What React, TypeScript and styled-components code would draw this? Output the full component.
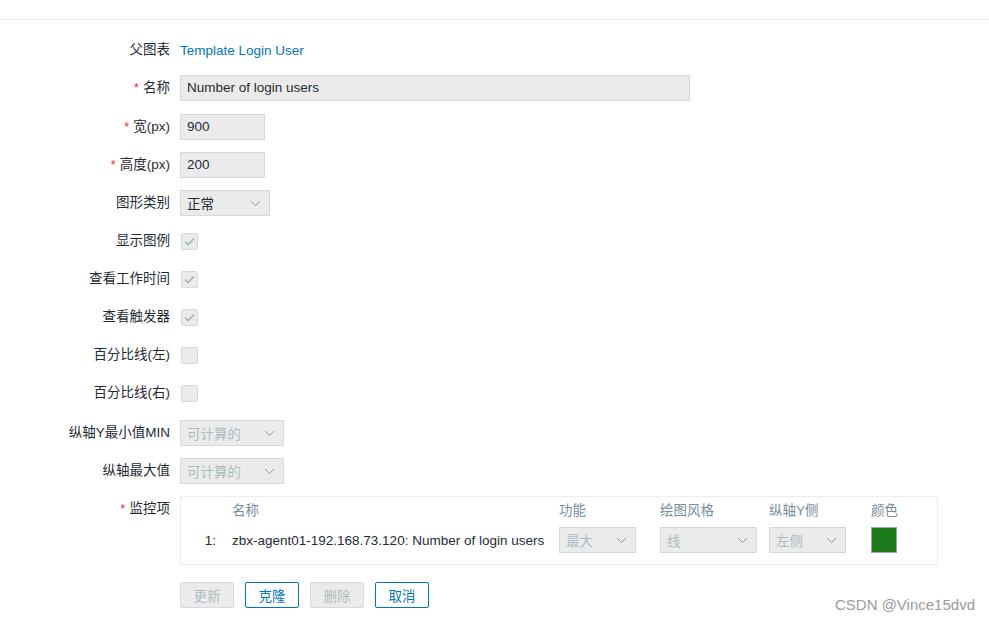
import React, { FunctionComponent } from "react";
import styled, { createGlobalStyle } from "styled-components";

const GlobalStyle = createGlobalStyle`
  html, body {
    margin: 0;
    padding: 0;
    background: #ffffff;
  }
  body {
    font-family: "Liberation Sans", Arial, "Noto Sans CJK SC", sans-serif;
    font-size: 13.5px;
    color: #1f2c33;
  }
`;

const Page = styled.div`
  position: relative;
  min-height: 100vh;
  background: #ffffff;
`;

const TopBar = styled.header`
  height: 19px;
  border-bottom: 1px solid #ebeef0;
`;

const FormList = styled.ul`
  list-style: none;
  margin: 0;
  padding: 17px 0 0;
  display: flex;
  flex-direction: column;
  gap: 12px;
`;

const Row = styled.li<{ $extraTop?: number }>`
  display: grid;
  grid-template-columns: 170px 1fr;
  column-gap: 10px;
  min-height: 26px;
  margin-top: ${(p) => p.$extraTop ?? 0}px;
`;

const Label = styled.label`
  display: flex;
  align-items: flex-start;
  justify-content: flex-end;
  height: 26px;
  line-height: 26px;
  white-space: nowrap;
`;

const Required = styled.span`
  color: #e33734;
  margin-right: 4px;
`;

const Field = styled.div`
  display: flex;
  align-items: center;
  min-height: 26px;
`;

const Link = styled.a`
  color: #0275b8;
  text-decoration: none;
`;

const TextInput = styled.div<{ $width: number }>`
  box-sizing: border-box;
  width: ${(p) => p.$width}px;
  height: 26px;
  line-height: 24px;
  padding: 0 6px;
  background: #ebebeb;
  border: 1px solid #d3dadf;
  color: #1f2c33;
`;

const SelectBox = styled.div<{ $width: number; $disabled?: boolean }>`
  box-sizing: border-box;
  width: ${(p) => p.$width}px;
  height: 26px;
  padding: 0 8px 0 6px;
  display: flex;
  align-items: center;
  justify-content: space-between;
  background: #ebebeb;
  border: 1px solid #d3dadf;
  color: ${(p) => (p.$disabled ? "#acbbc2" : "#1f2c33")};
`;

const Check = styled.span`
  box-sizing: border-box;
  width: 17px;
  height: 17px;
  margin-left: 1px;
  border: 1px solid #d3dadf;
  border-radius: 2px;
  background: #ebebeb;
  display: flex;
  align-items: center;
  justify-content: center;
`;

const ItemsBox = styled.div`
  box-sizing: border-box;
  width: 758px;
  border: 1px solid #ebeef0;
  padding: 6px 0 11px;
`;

const ItemsGrid = styled.div`
  display: grid;
  grid-template-columns: 51px 327px 101px 109px 102px 1fr;
  row-gap: 8px;
  align-items: center;
`;

const HeadCell = styled.div`
  color: #768d99;
  height: 16px;
  line-height: 16px;
`;

const IndexCell = styled.div`
  text-align: right;
  padding-right: 16px;
`;

const Swatch = styled.div<{ $color: string }>`
  box-sizing: border-box;
  width: 26px;
  height: 26px;
  background: ${(p) => p.$color};
  border: 1px solid #9aa7ae;
`;

const Buttons = styled.div`
  display: flex;
  gap: 11px;
`;

const Button = styled.button<{ $disabled?: boolean }>`
  box-sizing: border-box;
  width: 54px;
  height: 26px;
  padding: 0;
  border-radius: 2px;
  font-family: inherit;
  font-size: 13.5px;
  cursor: pointer;
  background: ${(p) => (p.$disabled ? "#ebebeb" : "#ffffff")};
  border: 1px solid ${(p) => (p.$disabled ? "#d3dadf" : "#0275b8")};
  color: ${(p) => (p.$disabled ? "#acbbc2" : "#0275b8")};
`;

const Watermark = styled.div`
  position: absolute;
  right: 14px;
  bottom: 6px;
  font-family: "Liberation Sans", Arial, sans-serif;
  font-size: 15px;
  color: #9a9a9a;
  text-shadow: 0 0 2px #ffffff;
`;

const Chevron: FunctionComponent = () => (
  <svg width="11" height="7" viewBox="0 0 11 7">
    <polyline points="1,1 5.5,5.5 10,1" fill="none" stroke="#8a9aa3" strokeWidth="1" />
  </svg>
);

const Tick: FunctionComponent = () => (
  <svg width="11" height="9" viewBox="0 0 11 9">
    <polyline points="1,4.5 4,7.5 10,1.5" fill="none" stroke="#a4b2b9" strokeWidth="1.6" />
  </svg>
);

const Select: FunctionComponent<{ width: number; disabled?: boolean; value: string }> = ({
  width,
  disabled,
  value,
}) => (
  <SelectBox $width={width} $disabled={disabled}>
    <span>{value}</span>
    <Chevron />
  </SelectBox>
);

const checkRows: { label: string; checked: boolean }[] = [
  { label: "显示图例", checked: true },
  { label: "查看工作时间", checked: true },
  { label: "查看触发器", checked: true },
  { label: "百分比线(左)", checked: false },
  { label: "百分比线(右)", checked: false },
];

const App: FunctionComponent = () => {
  return (
    <Page>
      <GlobalStyle />
      <TopBar />
      <FormList>
        <Row>
          <Label>父图表</Label>
          <Field>
            <Link href="#">Template Login User</Link>
          </Field>
        </Row>
        <Row>
          <Label>
            <Required>*</Required>名称
          </Label>
          <Field>
            <TextInput $width={510}>Number of login users</TextInput>
          </Field>
        </Row>
        <Row $extraTop={1}>
          <Label>
            <Required>*</Required>宽(px)
          </Label>
          <Field>
            <TextInput $width={85}>900</TextInput>
          </Field>
        </Row>
        <Row>
          <Label>
            <Required>*</Required>高度(px)
          </Label>
          <Field>
            <TextInput $width={85}>200</TextInput>
          </Field>
        </Row>
        <Row>
          <Label>图形类别</Label>
          <Field>
            <Select width={90} value="正常" />
          </Field>
        </Row>
        {checkRows.map((r) => (
          <Row key={r.label}>
            <Label>{r.label}</Label>
            <Field>
              <Check>{r.checked && <Tick />}</Check>
            </Field>
          </Row>
        ))}
        <Row $extraTop={2}>
          <Label>纵轴Y最小值MIN</Label>
          <Field>
            <Select width={104} value="可计算的" disabled />
          </Field>
        </Row>
        <Row>
          <Label>纵轴最大值</Label>
          <Field>
            <Select width={104} value="可计算的" disabled />
          </Field>
        </Row>
        <Row>
          <Label>
            <Required>*</Required>监控项
          </Label>
          <Field>
            <ItemsBox>
              <ItemsGrid>
                <div />
                <HeadCell>名称</HeadCell>
                <HeadCell>功能</HeadCell>
                <HeadCell>绘图风格</HeadCell>
                <HeadCell>纵轴Y侧</HeadCell>
                <HeadCell>颜色</HeadCell>
                <IndexCell>1:</IndexCell>
                <div>zbx-agent01-192.168.73.120: Number of login users</div>
                <Select width={77} value="最大" disabled />
                <Select width={97} value="线" disabled />
                <Select width={77} value="左侧" disabled />
                <Swatch $color="#1c7c19" />
              </ItemsGrid>
            </ItemsBox>
          </Field>
        </Row>
        <Row $extraTop={5}>
          <div />
          <Buttons>
            <Button $disabled>更新</Button>
            <Button>克隆</Button>
            <Button $disabled>删除</Button>
            <Button>取消</Button>
          </Buttons>
        </Row>
      </FormList>
      <Watermark>CSDN @Vince15dvd</Watermark>
    </Page>
  );
};

export default App;
